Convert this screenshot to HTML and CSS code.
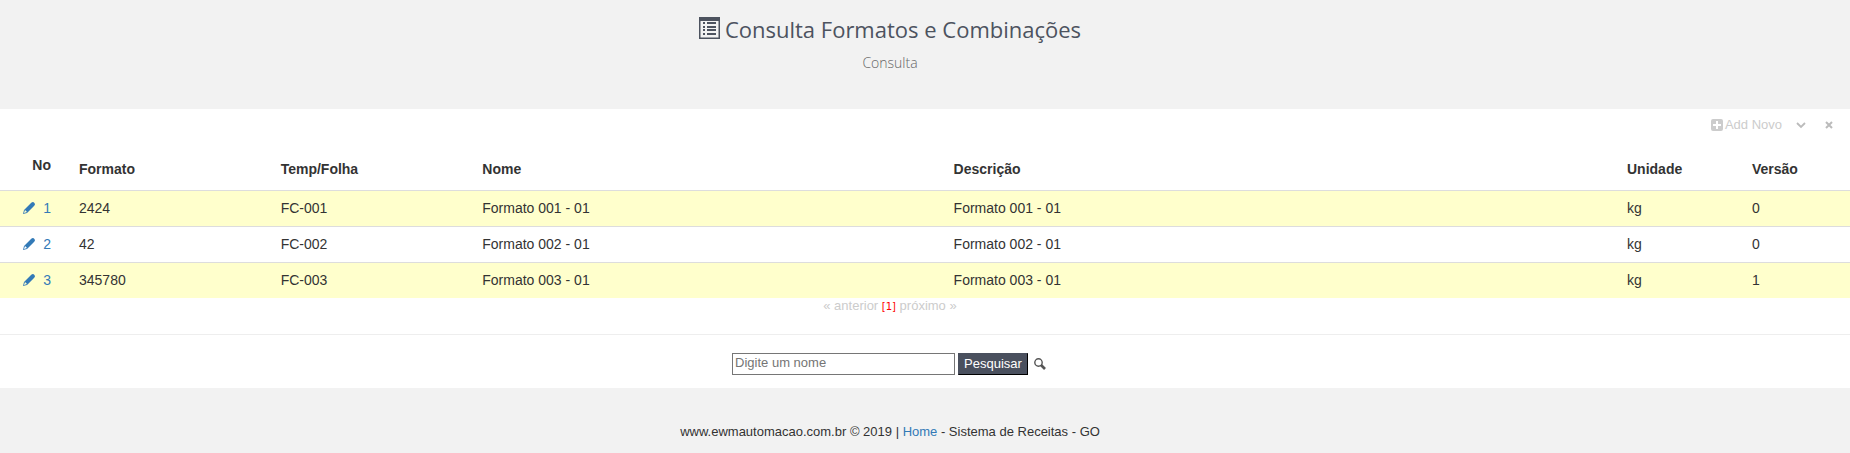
FILE: index.html
```html
<!DOCTYPE html>
<html lang="pt-br">
<head>
    <meta charset="UTF-8">
    <meta name="viewport" content="width=device-width, initial-scale=1.0">
    <title>Consulta Formatos e Combinações</title>
    <link rel="stylesheet" href="styles.css">
</head>
<body>
    <header class="page-header">
        <h1>
            <svg class="icon-list" viewBox="0 0 21 22" aria-hidden="true">
                <path fill-rule="evenodd" d="M0 0h21v22H0zM1.500 4v16.500h18V4z"/>
                <path d="M4 5h2v2H4zM4 9h2v2H4zM4 12h2v2H4zM4 16h2v2H4zM8 5h9v2H8zM8 9h9v2H8zM8 12h9v2H8zM8 16h9v2H8z"/>
            </svg>
            Consulta Formatos e Combinações
        </h1>
        <p class="subtitle">Consulta</p>
    </header>

    <main class="panel">
        <div class="panel-tools">
            <a href="#" class="add-link">
                <svg class="icon-plus" viewBox="0 0 12 12" aria-hidden="true">
                    <path fill-rule="evenodd" d="M2 0h8a2 2 0 0 1 2 2v8a2 2 0 0 1-2 2H2a2 2 0 0 1-2-2V2a2 2 0 0 1 2-2zM5 2v3H2v2h3v3h2V7h3V5H7V2z"/>
                </svg>
                <span>Add Novo</span>
            </a>
            <button type="button" class="tool" aria-label="Recolher">
                <svg viewBox="0 0 10 10"><path d="M1 3l4 4 4-4" fill="none" stroke="currentColor" stroke-width="1.800"/></svg>
            </button>
            <button type="button" class="tool" aria-label="Fechar">
                <svg viewBox="0 0 10 10"><path d="M2 2l6 6M8 2l-6 6" fill="none" stroke="currentColor" stroke-width="2"/></svg>
            </button>
        </div>

        <table class="table">
            <colgroup>
                <col class="col-no">
                <col class="col-formato">
                <col class="col-temp">
                <col class="col-nome">
                <col class="col-descricao">
                <col class="col-unidade">
                <col class="col-versao">
            </colgroup>
            <thead>
                <tr>
                    <th class="no">No</th>
                    <th>Formato</th>
                    <th>Temp/Folha</th>
                    <th>Nome</th>
                    <th>Descrição</th>
                    <th>Unidade</th>
                    <th>Versão</th>
                </tr>
            </thead>
            <tbody>
                <tr>
                    <td class="no"><a href="#"><svg class="icon-pencil" viewBox="0 0 12 12" aria-hidden="true"><path fill-rule="evenodd" d="M0 12l1-4 7-7q1-1 2-1t2 2q0 1-1 2l-7 7zM2 8l-1 3 3-1z"/></svg>1</a></td>
                    <td>2424</td>
                    <td>FC-001</td>
                    <td>Formato 001 - 01</td>
                    <td>Formato 001 - 01</td>
                    <td>kg</td>
                    <td>0</td>
                </tr>
                <tr>
                    <td class="no"><a href="#"><svg class="icon-pencil" viewBox="0 0 12 12" aria-hidden="true"><path fill-rule="evenodd" d="M0 12l1-4 7-7q1-1 2-1t2 2q0 1-1 2l-7 7zM2 8l-1 3 3-1z"/></svg>2</a></td>
                    <td>42</td>
                    <td>FC-002</td>
                    <td>Formato 002 - 01</td>
                    <td>Formato 002 - 01</td>
                    <td>kg</td>
                    <td>0</td>
                </tr>
                <tr>
                    <td class="no"><a href="#"><svg class="icon-pencil" viewBox="0 0 12 12" aria-hidden="true"><path fill-rule="evenodd" d="M0 12l1-4 7-7q1-1 2-1t2 2q0 1-1 2l-7 7zM2 8l-1 3 3-1z"/></svg>3</a></td>
                    <td>345780</td>
                    <td>FC-003</td>
                    <td>Formato 003 - 01</td>
                    <td>Formato 003 - 01</td>
                    <td>kg</td>
                    <td>1</td>
                </tr>
            </tbody>
        </table>

        <div class="pagination">« anterior <span class="current">[1]</span> próximo »</div>

        <form class="search">
            <input type="text" class="search-input" placeholder="Digite um nome" aria-label="Digite um nome">
            <button type="submit" class="search-button">Pesquisar</button>
            <svg class="icon-search" viewBox="0 0 12 12" aria-hidden="true">
                <circle cx="4.5" cy="4.5" r="3.7" fill="none" stroke="currentColor" stroke-width="1.4"/>
                <path d="M7 7l4 4" stroke="currentColor" stroke-width="2.6"/>
            </svg>
        </form>
    </main>

    <footer class="footer">
        www.ewmautomacao.com.br © 2019 | <a href="#">Home</a> - Sistema de Receitas - GO
    </footer>
</body>
</html>
```
FILE: styles.css
```css
* {
    box-sizing: border-box;
}

body {
    margin: 0;
    background: #f2f2f2;
    color: #333;
    font-family: 'Liberation Sans', Arial, sans-serif;
    font-size: 13px;
    line-height: 20px;
}

a {
    color: #337ab7;
    text-decoration: none;
}

svg {
    fill: currentColor;
}

.page-header {
    padding: 12px 70px 36px 0;
    text-align: center;
    font-family: 'Open Sans', sans-serif;
}

.page-header h1 {
    display: flex;
    justify-content: center;
    align-items: center;
    gap: 5px;
    margin: 0;
    color: #4d535f;
    font-size: 22px;
    font-weight: 400;
    line-height: 34px;
}

.icon-list {
    width: 21px;
    height: 22px;
    margin-bottom: 2px;
}

.subtitle {
    margin: 7px 0 0;
    color: #666;
    font-size: 14px;
    font-weight: 300;
    line-height: 20px;
}

.panel {
    background: #fff;
}

.panel-tools {
    display: flex;
    justify-content: flex-end;
    align-items: center;
    height: 32px;
    padding-right: 16px;
    color: #ccc;
}

.add-link {
    display: flex;
    align-items: center;
    gap: 2px;
    margin-right: 14px;
    color: #ccc;
}

.icon-plus {
    width: 12px;
    height: 12px;
}

.tool {
    width: 10px;
    height: 10px;
    margin: 0;
    padding: 0;
    border: none;
    background: none;
    color: #bbb;
    cursor: pointer;
}

.tool + .tool {
    margin-left: 18px;
}

.tool svg {
    display: block;
}

.table {
    width: 100%;
    border-collapse: separate;
    border-spacing: 0;
    table-layout: fixed;
    font-size: 14px;
    line-height: 19px;
}

.table th {
    height: 49px;
    padding: 0 0 11px;
    text-align: left;
    vertical-align: bottom;
}

.table td {
    height: 36px;
    padding: 8px 0;
    border-top: 1px solid #ddd;
}

.table .no {
    padding-right: 28px;
    text-align: right;
}

.table th.no {
    padding-bottom: 15px;
}

.table tbody tr:nth-child(odd) {
    background: #ffffcc;
}

.col-no {
    width: 79px;
}

.col-formato,
.col-temp {
    width: 10.9%;
}

.col-descricao {
    width: 36.4%;
}

.col-unidade {
    width: 125px;
}

.col-versao {
    width: 98px;
}

.icon-pencil {
    width: 12px;
    height: 12px;
    margin-right: 8px;
    vertical-align: -1px;
}

.pagination {
    height: 37px;
    padding-right: 70px;
    border-bottom: 1px solid #eee;
    color: #ccc;
    line-height: 16px;
    text-align: center;
}

.current {
    color: #f00;
    font-family: 'DejaVu Sans', sans-serif;
    font-size: 10px;
}

.search {
    display: flex;
    justify-content: center;
    align-items: center;
    gap: 3px;
    padding: 18px 72px 13px 0;
}

.search-input {
    width: 223px;
    height: 22px;
    padding: 0 2px 3px;
    border: 1px solid #767676;
    font: inherit;
}

.search-input::placeholder {
    color: #757575;
}

.search-button {
    height: 22px;
    padding: 0 5px 3px;
    border: 1px solid #4a505e;
    border-right-color: #000;
    border-bottom-color: #000;
    background: #4a505e;
    color: #fff;
    font: inherit;
    cursor: pointer;
}

.icon-search {
    width: 12px;
    height: 12px;
    margin-left: 3px;
    color: #555;
}

.footer {
    padding: 34px 70px 11px 0;
    text-align: center;
}
```
